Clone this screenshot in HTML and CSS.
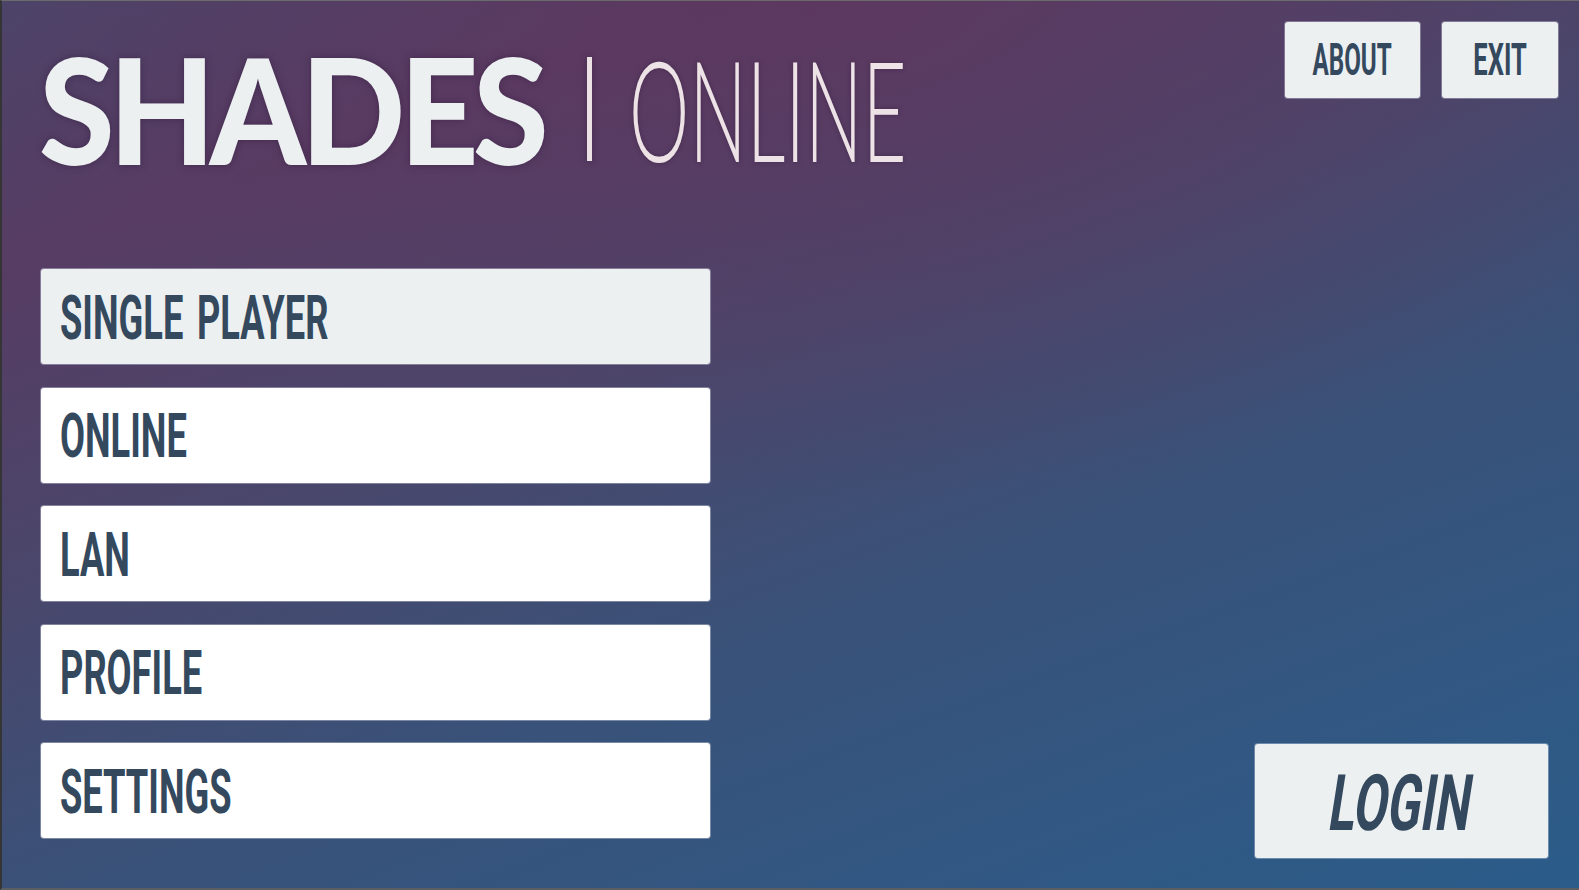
FILE: index.html
```html
<!DOCTYPE html>
<html lang="en">
<head>
<meta charset="utf-8">
<title>Shades | Online</title>
<link rel="stylesheet" href="styles.css">
</head>
<body>
<div class="screen">
  <header class="topbar">
    <h1 class="title">
      <span class="title-main-wrap"><span class="title-main">SHADES</span></span>
      <span class="title-sep"></span>
      <span class="title-sub"><span class="sub-text">ONLINE</span></span>
    </h1>
    <nav class="toplinks">
      <button class="btn-small btn-about"><span class="cond">ABOUT</span></button>
      <button class="btn-small btn-exit"><span class="cond">EXIT</span></button>
    </nav>
  </header>
  <main class="content">
    <ul class="menu">
      <li class="menu-item active"><span class="cond">SINGLE PLAYER</span></li>
      <li class="menu-item"><span class="cond">ONLINE</span></li>
      <li class="menu-item"><span class="cond">LAN</span></li>
      <li class="menu-item"><span class="cond">PROFILE</span></li>
      <li class="menu-item"><span class="cond">SETTINGS</span></li>
    </ul>
    <button class="btn-login"><span class="cond italic">LOGIN</span></button>
  </main>
</div>
</body>
</html>
```
FILE: styles.css
```css
html, body {
  margin: 0;
  padding: 0;
}
body {
  width: 1579px;
  height: 890px;
  overflow: hidden;
  font-family: Roboto, "Liberation Sans", sans-serif;
}
.screen {
  box-sizing: border-box;
  width: 1579px;
  height: 890px;
  border-top: 1px solid #6b6b6b;
  border-left: 2px solid #353535;
  border-bottom: 2px solid #5a5d62;
  background:
    radial-gradient(ellipse 900px 500px at 850px 0px, rgba(98, 52, 92, 0.55), rgba(98, 52, 92, 0) 100%),
    linear-gradient(160deg, #4c4469 0%, #573c63 18%, #4a466b 40%, #395279 63%, #2b5c8a 100%);
  display: flex;
  flex-direction: column;
}
.topbar {
  display: flex;
  justify-content: space-between;
  align-items: flex-start;
}
.title {
  margin: 0;
  padding: 34px 0 0 37px;
  display: flex;
  align-items: center;
  font-weight: normal;
  line-height: 1;
}
.title-main-wrap {
  display: inline-block;
  width: 506px;
}
.title-main {
  display: inline-block;
  font-family: Lato, sans-serif;
  font-weight: 900;
  font-size: 147px;
  letter-spacing: -6px;
  color: #ecf0f1;
  transform: scaleX(0.935);
  transform-origin: left center;
  text-shadow: 0 0 8px rgba(50, 25, 60, 0.55);
}
.title-sep {
  width: 5px;
  height: 104px;
  background: #ece2e6;
  margin: 0 37px 0 42px;
  box-shadow: 0 0 6px rgba(50, 25, 60, 0.5);
}
.title-sub {
  display: inline-block;
  width: 272px;
  margin-top: -3px;
}
.sub-text {
  display: inline-block;
  font-family: Lato, sans-serif;
  font-weight: 300;
  font-size: 141px;
  color: #ede2e5;
  transform: scaleX(0.54);
  transform-origin: left center;
  text-shadow: 0 0 6px rgba(50, 25, 60, 0.5);
}
.toplinks {
  display: flex;
  gap: 22px;
  margin: 21px 21px 0 0;
}
.btn-small {
  height: 76px;
  border: none;
  border-radius: 3px;
  background: #ecf0f1;
  color: #34495e;
  font-family: Roboto, sans-serif;
  font-weight: 700;
  font-size: 44px;
  padding: 0;
  display: flex;
  align-items: center;
  justify-content: center;
  box-shadow: 0 0 0 1px rgba(220, 220, 235, 0.35);
}
.btn-about { width: 135px; }
.btn-exit { width: 116px; }
.cond {
  display: inline-block;
  white-space: nowrap;
}
.btn-about .cond {
  transform: scaleX(0.55);
}
.btn-exit .cond {
  transform: scaleX(0.58);
}
.content {
  flex: 1;
  display: flex;
  justify-content: space-between;
  align-items: flex-start;
  padding: 0 31px 0 39px;
  margin-top: 87px;
}
.menu {
  list-style: none;
  margin: 0;
  padding: 0;
  width: 669px;
  display: flex;
  flex-direction: column;
  gap: 23.5px;
}
.menu-item {
  box-sizing: border-box;
  height: 95px;
  background: #ffffff;
  border-radius: 3px;
  box-shadow: 0 0 0 1px rgba(200, 205, 220, 0.45);
  display: flex;
  align-items: center;
  padding-left: 19px;
  padding-top: 1px;
  color: #34495e;
  font-family: Roboto, sans-serif;
  font-weight: 700;
  font-size: 62px;
}
.menu-item.active {
  background: #ecf0f1;
}
.menu-item .cond {
  transform: scaleX(0.585);
  transform-origin: left center;
  word-spacing: 8px;
}
.btn-login {
  margin-top: 475px;
  width: 293px;
  height: 114px;
  border: none;
  border-radius: 3px;
  background: #ecf0f1;
  color: #34495e;
  font-family: Roboto, sans-serif;
  font-weight: 700;
  font-size: 78px;
  padding: 4px 0 0 0;
  display: flex;
  align-items: center;
  justify-content: center;
  box-shadow: 0 0 0 1px rgba(200, 215, 230, 0.4);
}
.cond.italic {
  transform: scaleX(0.63) skewX(-14deg);
  transform-origin: center center;
}
```
